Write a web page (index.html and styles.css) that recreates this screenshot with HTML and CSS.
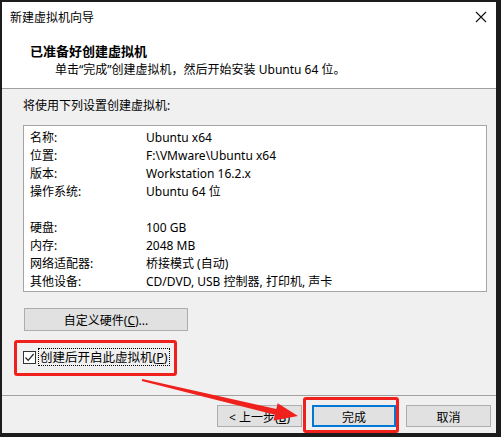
FILE: index.html
```html
<html>

<head>
  <title>新建虚拟机向导</title>
  <link rel="stylesheet" href="styles.css">
</head>

<body>
  <div id="wizard">
    <div class="titlebar">
      <span class="caption">新建虚拟机向导</span>
      <svg class="close" width="12" height="12" viewBox="0 0 12 12">
        <path d="M1 1 L11 11 M11 1 L1 11" stroke="#111" stroke-width="1.1" fill="none" />
      </svg>
    </div>
    <div class="header">
      <h3>已准备好创建虚拟机</h3>
      <div class="sub">单击“完成”创建虚拟机，然后开始安装 Ubuntu 64 位。</div>
    </div>
    <div class="content">
      <div class="intro">将使用下列设置创建虚拟机:</div>
      <div class="summary">
        <div class="row"><span class="key">名称:</span><span>Ubuntu x64</span></div>
        <div class="row"><span class="key">位置:</span><span>F:\VMware\Ubuntu x64</span></div>
        <div class="row"><span class="key">版本:</span><span>Workstation 16.2.x</span></div>
        <div class="row"><span class="key">操作系统:</span><span>Ubuntu 64 位</span></div>
        <div class="row"></div>
        <div class="row"><span class="key">硬盘:</span><span>100 GB</span></div>
        <div class="row"><span class="key">内存:</span><span>2048 MB</span></div>
        <div class="row"><span class="key">网络适配器:</span><span>桥接模式 (自动)</span></div>
        <div class="row"><span class="key">其他设备:</span><span>CD/DVD, USB 控制器, 打印机, 声卡</span></div>
      </div>
      <button class="btn hw">自定义硬件(<u>C</u>)...</button>
      <label class="check">
        <span class="box">
          <svg width="11" height="11" viewBox="0 0 11 11">
            <path d="M1.5 5.5 L4.2 8.3 L9.6 2" stroke="#222" stroke-width="1.2" fill="none" />
          </svg>
        </span>
        <span class="focus">创建后开启此虚拟机(<u>P</u>)</span>
      </label>
    </div>
    <div class="footer">
      <button class="btn">&lt; 上一步(<u>B</u>)</button>
      <button class="btn default">完成</button>
      <button class="btn">取消</button>
    </div>
  </div>

  <!-- red markup drawn over the dialog -->
  <div class="mark mark-check"></div>
  <div class="mark mark-finish"></div>
  <svg class="arrow" width="501" height="437" viewBox="0 0 501 437">
    <polygon fill="#f0201c"
      points="141.8,381 142.2,379 276.3,409 277.7,403.2 298,416 273.5,420.6 274.9,414.8" />
  </svg>
</body>

</html>
```

FILE: styles.css
```css
body {
  margin: 0;
  background: #1c1c1c;
  font-family: "Noto Sans", "Noto Sans CJK SC", sans-serif;
  font-size: 12px;
  color: #000;
  position: relative;
  width: 501px;
  height: 437px;
  overflow: hidden;
}

#wizard {
  margin: 2px 0 0 2px;
  width: 494px;
  height: 431px;
  background: #f0f0f0;
  display: flex;
  flex-direction: column;
}

.titlebar {
  height: 28px;
  background: #fff;
  display: flex;
  align-items: center;
  justify-content: space-between;
  padding: 0 8px 0 8px;
}

.caption {
  line-height: 16px;
  padding-top: 3px;
}

.close {
  margin-right: 1px;
  margin-top: 2px;
}

.header {
  height: 59px;
  background: #fff;
  border-bottom: 1px solid #a0a0a0;
  padding-left: 28px;
  box-sizing: border-box;
}

.header h3 {
  margin: 0;
  padding-top: 12px;
  font-size: 13px;
  font-weight: 700;
  line-height: 18px;
  font-family: "Noto Sans CJK SC", sans-serif;
}

.sub {
  padding: 1px 0 0 25px;
  line-height: 18px;
}

.content {
  flex: 1;
  padding: 8px 0 0 21px;
}

.intro {
  line-height: 18px;
}

.summary {
  margin-top: 10px;
  width: 464px;
  height: 167px;
  box-sizing: border-box;
  background: #fff;
  border: 1px solid #a5a5a5;
  padding: 3px 0 0 6px;
}

.row {
  display: flex;
  height: 18px;
  line-height: 18px;
}

.key {
  width: 116px;
  flex: none;
}

.btn {
  font-family: inherit;
  font-size: 12px;
  height: 22px;
  width: 85px;
  padding: 1px 0 0;
  background: #e1e1e1;
  border: 1px solid #adadad;
  color: #000;
}

.hw {
  display: block;
  margin: 16px 0 0 1px;
  width: 164px;
  height: 23px;
}

.check {
  display: flex;
  align-items: center;
  margin: 19px 0 0 0;
  height: 14px;
}

.box {
  width: 11px;
  height: 11px;
  border: 1px solid #333;
  background: #fff;
  display: flex;
}

.focus {
  margin-left: 2px;
  border: 1px dotted #000;
  line-height: 15px;
  padding: 1px 1px 0;
  font-size: 12.5px;
}

.footer {
  height: 38px;
  border-top: 1px solid #a0a0a0;
  display: flex;
  justify-content: flex-end;
  gap: 10px;
  padding: 9px 5px 0 0;
  box-sizing: border-box;
}

.btn.default {
  width: 84px;
  border: 2px solid #0078d7;
}

.mark {
  position: absolute;
  border: 3px solid #f0201c;
  border-radius: 3px;
  box-sizing: border-box;
}

.mark-check {
  left: 14px;
  top: 340px;
  width: 163px;
  height: 36px;
}

.mark-finish {
  left: 303px;
  top: 397px;
  width: 96px;
  height: 36px;
}

.arrow {
  position: absolute;
  left: 0;
  top: 0;
}
```
